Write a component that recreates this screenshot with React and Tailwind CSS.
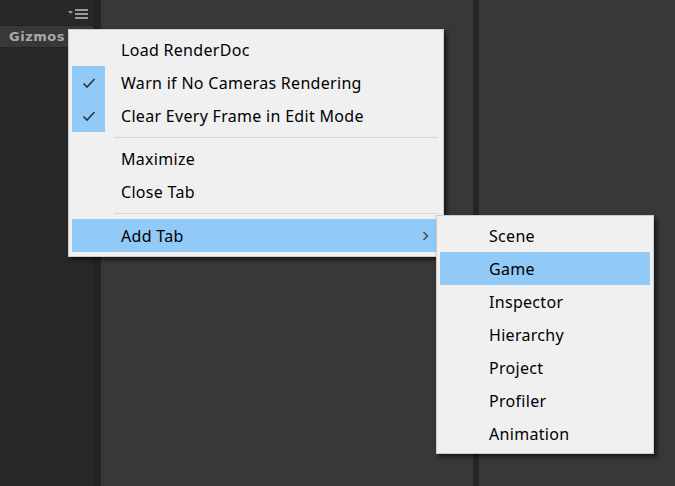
import React from 'react';

const Check = () => (
  <svg width="14" height="12" viewBox="0 0 14 12" className="block">
    <path d="M1.5 6.5 L5 10 L12.5 2" fill="none" stroke="#333" strokeWidth="1.6" />
  </svg>
);

const Chevron = () => (
  <svg width="7" height="10" viewBox="0 0 7 10" className="block">
    <path d="M1.5 1 L5.5 5 L1.5 9" fill="none" stroke="#444" strokeWidth="1.4" />
  </svg>
);

const MenuItem = ({ label, checked, active, arrow }) => (
  <div className={`flex items-center h-[33px] ${active ? 'bg-[#91c9f7]' : ''}`}>
    <div className={`w-[33px] h-full flex items-center justify-center ${checked ? 'bg-[#91c9f7]' : ''}`}>
      {checked && <Check />}
    </div>
    <div className="w-[16px]" />
    <span className="flex-1 text-black tracking-[0.3px]">{label}</span>
    {arrow && <span className="w-[18px]"><Chevron /></span>}
  </div>
);

const Separator = ({ h }) => (
  <div className={`${h} flex items-center pl-[42px] pr-[2px]`}>
    <div className="h-px w-full bg-[#d6d6d6]" />
  </div>
);

const App = () => {
  return (
    <div className="relative w-[675px] h-[486px] overflow-hidden flex bg-[#383838]" style={{ fontFamily: '"Noto Sans", sans-serif' }}>
      <div className="w-[93px] bg-[#282828] flex flex-col">
        <div className="h-[25px] flex justify-end items-center pr-[3px] pt-[2px]">
          <svg width="22" height="10" viewBox="0 0 22 10">
            <path d="M0 2 L5 2 L2.5 5 Z" fill="#9a9a9a" />
            <rect x="7" y="0" width="13" height="2" fill="#9a9a9a" />
            <rect x="7" y="4" width="13" height="2" fill="#9a9a9a" />
            <rect x="7" y="8" width="13" height="2" fill="#9a9a9a" />
          </svg>
        </div>
        <div className="h-[23px] bg-[#383838] border-y border-[#232323] flex items-center pl-[9px] text-[13px] font-bold text-[#a8a8a8] tracking-[0.5px]" style={{ fontFamily: '"DejaVu Sans", sans-serif' }}>
          Gizmos
        </div>
      </div>
      <div className="w-[8px] bg-[#232323]" />
      <div className="w-[372px] bg-[#383838]" />
      <div className="w-[6px] bg-[#252525]" />
      <div className="flex-1 bg-[#383838]" />

      <div className="absolute left-[68px] top-[29px] w-[376px] h-[228px] bg-[#f0f0f0] border border-[#cccccc] p-[3px] text-[16px] shadow-[3px_3px_4px_rgba(0,0,0,0.55)]">
        <MenuItem label="Load RenderDoc" />
        <MenuItem label="Warn if No Cameras Rendering" checked />
        <MenuItem label="Clear Every Frame in Edit Mode" checked />
        <Separator h="h-[10px]" />
        <MenuItem label="Maximize" />
        <MenuItem label="Close Tab" />
        <Separator h="h-[11px]" />
        <MenuItem label="Add Tab" active arrow />
      </div>

      <div className="absolute left-[436px] top-[215px] w-[218px] h-[239px] bg-[#f0f0f0] border border-[#cccccc] p-[3px] text-[16px] shadow-[3px_3px_4px_rgba(0,0,0,0.55)]">
        <MenuItem label="Scene" />
        <MenuItem label="Game" active />
        <MenuItem label="Inspector" />
        <MenuItem label="Hierarchy" />
        <MenuItem label="Project" />
        <MenuItem label="Profiler" />
        <MenuItem label="Animation" />
      </div>
    </div>
  );
};

export default App;
